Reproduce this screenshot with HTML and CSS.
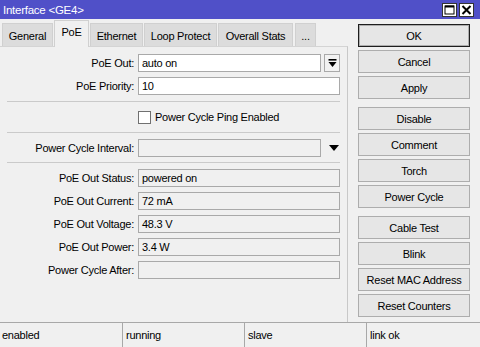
FILE: index.html
```html
<!DOCTYPE html>
<html>
<head>
<meta charset="utf-8">
<link rel="stylesheet" href="styles.css">
</head>
<body>
<div class="titlebar">
  <span class="title">Interface &lt;GE4&gt;</span>
  <div class="tb-btns">
    <span class="tb-btn"><svg width="11" height="10" viewBox="0 0 11 10"><rect x="1" y="1" width="9" height="8" fill="none" stroke="#000" stroke-width="1"/><rect x="1" y="0.5" width="9" height="2" fill="#000"/></svg></span>
    <span class="tb-btn"><svg width="11" height="10" viewBox="0 0 11 10"><path d="M1.5 1 L9.5 9 M9.5 1 L1.5 9" stroke="#000" stroke-width="2"/></svg></span>
  </div>
</div>
<div class="main">
  <div class="left">
    <div class="tabs">
      <div class="tab w-general">General</div>
      <div class="tab active w-poe">PoE</div>
      <div class="tab w-eth">Ethernet</div>
      <div class="tab w-loop">Loop Protect</div>
      <div class="tab w-stats">Overall Stats</div>
      <div class="tab w-more">...</div>
    </div>
    <div class="panel">
      <div class="row first">
        <span class="label">PoE Out:</span>
        <div class="with-btn">
          <div class="field input">auto on</div>
          <div class="ddbtn"><svg width="9" height="9" viewBox="0 0 9 9"><rect x="0.5" y="0" width="8" height="1.6" fill="#000"/><polygon points="0.5,3 8.5,3 4.5,8" fill="#000"/></svg></div>
        </div>
      </div>
      <div class="row">
        <span class="label">PoE Priority:</span>
        <div class="field input">10</div>
      </div>
      <div class="sep"></div>
      <div class="row">
        <span class="label"></span>
        <label class="check"><span class="box"></span><span>Power Cycle Ping Enabled</span></label>
      </div>
      <div class="sep"></div>
      <div class="row">
        <span class="label">Power Cycle Interval:</span>
        <div class="with-btn">
          <div class="field ro"></div>
          <div class="arrow"><svg width="10" height="6" viewBox="0 0 10 6"><polygon points="0,0 10,0 5,6" fill="#000"/></svg></div>
        </div>
      </div>
      <div class="sep sep3"></div>
      <div class="row status-first">
        <span class="label">PoE Out Status:</span>
        <div class="field ro">powered on</div>
      </div>
      <div class="row">
        <span class="label">PoE Out Current:</span>
        <div class="field ro">72 mA</div>
      </div>
      <div class="row">
        <span class="label">PoE Out Voltage:</span>
        <div class="field ro">48.3 V</div>
      </div>
      <div class="row">
        <span class="label">PoE Out Power:</span>
        <div class="field ro">3.4 W</div>
      </div>
      <div class="row">
        <span class="label">Power Cycle After:</span>
        <div class="field ro"></div>
      </div>
    </div>
  </div>
  <div class="buttons">
    <div class="btn default">OK</div>
    <div class="btn">Cancel</div>
    <div class="btn">Apply</div>
    <div class="btn group">Disable</div>
    <div class="btn">Comment</div>
    <div class="btn">Torch</div>
    <div class="btn">Power Cycle</div>
    <div class="btn group">Cable Test</div>
    <div class="btn">Blink</div>
    <div class="btn">Reset MAC Address</div>
    <div class="btn">Reset Counters</div>
  </div>
</div>
<div class="statusbar">
  <div class="seg">enabled</div>
  <div class="seg">running</div>
  <div class="seg">slave</div>
  <div class="seg last">link ok</div>
</div>
</body>
</html>
```
FILE: styles.css
```css
* { box-sizing: border-box; }
html, body { margin: 0; padding: 0; }
body {
  width: 480px;
  height: 347px;
  overflow: hidden;
  background: #f0f0f0;
  font-family: "Liberation Sans", Arial, sans-serif;
  font-size: 11px;
  letter-spacing: -0.25px;
  color: #000;
}
.titlebar {
  height: 19px;
  background: #5050c8;
  color: #fff;
  display: flex;
  align-items: center;
  justify-content: space-between;
  padding: 0 6px 0 3px;
  font-size: 11.5px;
}
.tb-btns { display: flex; gap: 2px; }
.tb-btn {
  width: 15px;
  height: 14px;
  background: #fff;
  border: 1px solid #333;
  display: flex;
  align-items: center;
  justify-content: center;
}
.main { display: flex; height: 303px; }
.left { width: 348px; display: flex; flex-direction: column; }
.tabs {
  height: 27px;
  display: flex;
  align-items: flex-end;
  padding-left: 2px;
  position: relative;
  z-index: 1;
}
.tab {
  height: 23px;
  background: #dcdcdc;
  border: 1px solid #d0d0d0;
  border-bottom: none;
  display: flex;
  align-items: center;
  justify-content: center;
  margin-right: 1px;
  padding-top: 1px;
}
.tab.active {
  height: 27px;
  background: #f0f0f0;
  border-color: #d0d0d0;
  margin-bottom: -1px;
  align-items: flex-start;
  padding-top: 5px;
}
.w-general { width: 51px; }
.w-poe { width: 35px; }
.w-eth { width: 53px; }
.w-loop { width: 73px; }
.w-stats { width: 75px; }
.w-more { width: 21px; margin-left: 1px; }
.panel {
  flex: 1;
  border-top: 1px solid #d4d4d4;
  border-right: 1px solid #c8c8c8;
  padding: 7px 7px 0 0;
  display: flex;
  flex-direction: column;
}
.row {
  display: grid;
  grid-template-columns: 134px 1fr;
  column-gap: 4px;
  align-items: center;
  height: 18px;
  margin-top: 5px;
}
.row.first { margin-top: 0; }
.row.status-first { margin-top: 7px; }
.label { text-align: right; white-space: nowrap; }
.field {
  height: 18px;
  border: 1px solid #a9a9a9;
  padding: 0 3px;
  display: flex;
  align-items: center;
  white-space: nowrap;
}
.field.input { background: #fff; }
.field.ro { background: #f0f0f0; }
.with-btn {
  display: grid;
  grid-template-columns: 1fr 16px;
  column-gap: 3px;
  align-items: center;
}
.ddbtn {
  height: 18px;
  border: 1px solid #a9a9a9;
  background: #f2f2f2;
  display: flex;
  align-items: center;
  justify-content: center;
}
.arrow {
  display: flex;
  align-items: center;
  justify-content: center;
  padding-left: 4px;
}
.sep {
  height: 1px;
  background: #cacaca;
  margin: 6px 0 0 7px;
}
.sep + .row { margin-top: 6px; }
.sep3 { margin-top: 5px; }
.check { display: flex; align-items: center; gap: 4px; }
.box {
  width: 13px;
  height: 13px;
  background: #fff;
  border: 1px solid #707070;
}
.buttons {
  margin-left: 10px;
  width: 112px;
  padding-top: 5px;
  display: flex;
  flex-direction: column;
}
.btn {
  height: 23px;
  margin-top: 3px;
  border: 1px solid #adadad;
  background: #e6e6e6;
  display: flex;
  align-items: center;
  justify-content: center;
  white-space: nowrap;
}
.btn.default {
  margin-top: 0;
  border: 1px solid #1e1e1e;
  box-shadow: inset 0 0 0 1px #adadad;
}
.btn.group { margin-top: 8px; }
.statusbar {
  height: 25px;
  display: flex;
  gap: 4px;
  border-top: 1px solid #a8a8a8;
}
.seg {
  width: 118px;
  border-left: 1px solid #a8a8a8;
  padding-left: 3px;
  display: flex;
  align-items: center;
}
.seg:first-child { border-left: none; padding-left: 2px; }
.seg.last { flex: 1; }
```
